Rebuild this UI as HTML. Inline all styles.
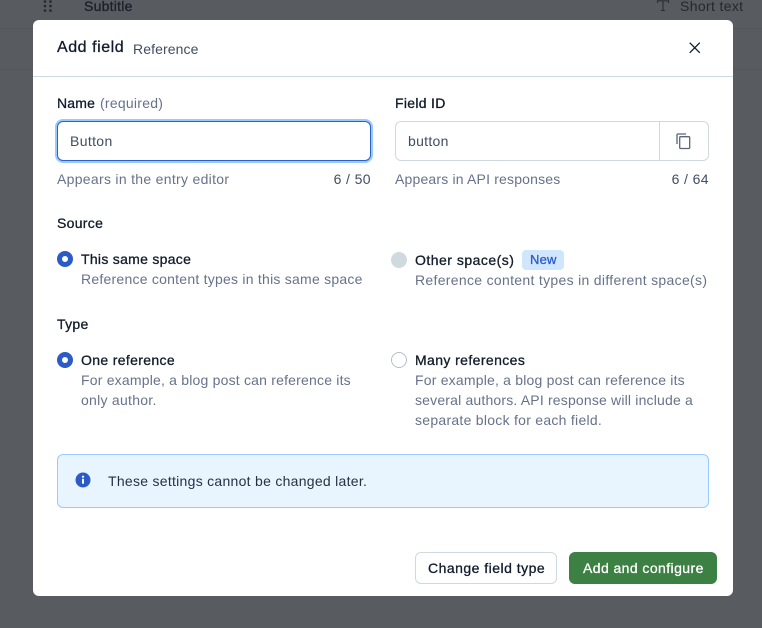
<!DOCTYPE html>
<html><head><meta charset="utf-8">
<style>
html,body{margin:0;padding:0;width:762px;height:628px;overflow:hidden;background:#585b60;font-family:"Liberation Sans",sans-serif}
.t{position:absolute;white-space:nowrap;font-size:14px;line-height:20px;color:#111b2b}
.g{color:#67728a}
.d{color:#414d63}
.b{-webkit-text-stroke:.3px currentColor}
.box{position:absolute;box-sizing:border-box}
.line{position:absolute;background:#53565b;height:1px}
</style></head><body>
<div class="line" style="left:0;top:28px;width:33px"></div>
<div class="line" style="left:733px;top:28px;width:29px"></div>
<div class="line" style="left:0;top:69px;width:33px"></div>
<div class="line" style="left:733px;top:69px;width:29px"></div>
<svg style="position:absolute;left:43px;top:0" width="10" height="13"><g fill="#23272e"><circle cx="2" cy="1.500" r="1.300"/><circle cx="7.500" cy="1.500" r="1.300"/><circle cx="2" cy="6" r="1.300"/><circle cx="7.500" cy="6" r="1.300"/><circle cx="2" cy="10.500" r="1.300"/><circle cx="7.500" cy="10.500" r="1.300"/></g></svg>
<div class="t b" style="left:84px;top:-4px;color:#1b2028;letter-spacing:.25px">Subtitle</div>
<svg style="position:absolute;left:656px;top:0" width="14" height="12"><path d="M1.500 3V.8H12.500V3M7 .8V10.500M5 10.500H9" fill="none" stroke="#2b2f36" stroke-width="1.100"/></svg>
<div class="t" style="left:680px;top:-4px;color:#25292f;letter-spacing:.35px">Short text</div>

<div class="box" style="left:33px;top:20px;width:700px;height:576px;background:#fff;border-radius:6px"></div>
<div class="box" style="left:33px;top:76px;width:700px;height:1px;background:#cfd9e0"></div>
<div class="t b" style="left:57px;top:38px;font-size:16px;line-height:20px;letter-spacing:.55px">Add field</div>
<div class="t d" style="left:133px;top:39px;letter-spacing:.1px">Reference</div>
<svg style="position:absolute;left:687px;top:40px" width="16" height="16"><path d="M2.700 2.700L12.800 12.800M12.800 2.700L2.700 12.800" stroke="#111b2b" stroke-width="1.300" fill="none"/></svg>

<div class="t b" style="left:57px;top:93px;letter-spacing:.2px">Name</div>
<div class="t g" style="left:100px;top:93px;letter-spacing:.25px">(required)</div>
<div class="box" style="left:55px;top:119px;width:318px;height:44px;background:#98cbff;border-radius:8px"></div>
<div class="box" style="left:57px;top:121px;width:314px;height:40px;border:1px solid #2f5fc9;border-radius:6px;background:#fff"></div>
<div class="t d" style="left:70px;top:131px;letter-spacing:.35px">Button</div>
<div class="t g" style="left:57px;top:169px;letter-spacing:.3px">Appears in the entry editor</div>
<div class="t d" style="right:391px;top:169px;letter-spacing:.4px">6 / 50</div>

<div class="t b" style="left:395px;top:93px;letter-spacing:.3px">Field ID</div>
<div class="box" style="left:395px;top:121px;width:314px;height:40px;border:1px solid #cfd9e0;border-radius:6px;background:#fff"></div>
<div class="box" style="left:659px;top:122px;width:1px;height:38px;background:#cfd9e0"></div>
<div class="t d" style="left:408px;top:131px;letter-spacing:.3px">button</div>
<svg style="position:absolute;left:675px;top:132px" width="18" height="18"><path d="M2 12V2.800C2 2.300 2.300 2 2.800 2H11" fill="none" stroke="#5a6579" stroke-width="1.300"/><rect x="4.700" y="4.700" width="10" height="11.800" rx="1" fill="none" stroke="#5a6579" stroke-width="1.300"/></svg>
<div class="t g" style="left:395px;top:169px;letter-spacing:.18px">Appears in API responses</div>
<div class="t d" style="right:53px;top:169px;letter-spacing:.4px">6 / 64</div>

<div class="t b" style="left:57px;top:213px;letter-spacing:.3px">Source</div>
<div class="box" style="left:57px;top:251px;width:16px;height:16px;border-radius:50%;border:5px solid #2c5bc7;background:#fff"></div>
<div class="t b" style="left:81px;top:249px;letter-spacing:.29px">This same space</div>
<div class="t g" style="left:81px;top:269px;letter-spacing:.24px">Reference content types in this same space</div>
<div class="box" style="left:391px;top:252px;width:16px;height:16px;border-radius:50%;background:#cfd9e0"></div>
<div class="t b" style="left:415px;top:250px;letter-spacing:.49px">Other space(s)</div>
<div class="box" style="left:522px;top:250px;width:42px;height:20px;border-radius:4px;background:#cfe6fd"></div>
<div class="t b" style="left:530px;top:250px;font-size:13px;color:#2c5bc7;letter-spacing:.2px">New</div>
<div class="t g" style="left:415px;top:270px;letter-spacing:.31px">Reference content types in different space(s)</div>

<div class="t b" style="left:57px;top:314px;letter-spacing:.3px">Type</div>
<div class="box" style="left:57px;top:352px;width:16px;height:16px;border-radius:50%;border:5px solid #2c5bc7;background:#fff"></div>
<div class="t b" style="left:81px;top:350px;letter-spacing:.35px">One reference</div>
<div class="t g" style="left:81px;top:370px;letter-spacing:.2px">For example, a blog post can reference its</div>
<div class="t g" style="left:81px;top:390px;letter-spacing:.27px">only author.</div>
<div class="box" style="left:391px;top:352px;width:16px;height:16px;border-radius:50%;border:1px solid #b4bfca;background:#fff"></div>
<div class="t b" style="left:415px;top:350px;letter-spacing:.4px">Many references</div>
<div class="t g" style="left:415px;top:370px;letter-spacing:.2px">For example, a blog post can reference its</div>
<div class="t g" style="left:415px;top:390px;letter-spacing:.18px">several authors. API response will include a</div>
<div class="t g" style="left:415px;top:410px;letter-spacing:.27px">separate block for each field.</div>

<div class="box" style="left:57px;top:454px;width:652px;height:54px;background:#e8f5ff;border:1px solid #98cbff;border-radius:6px"></div>
<svg style="position:absolute;left:75px;top:472px" width="16" height="16"><circle cx="8" cy="8" r="7.500" fill="#2c5bc7"/><circle cx="8" cy="4.700" r="1.100" fill="#fff"/><rect x="7" y="6.800" width="2" height="4.900" fill="#fff"/></svg>
<div class="t" style="left:108px;top:471px;color:#273142;letter-spacing:.28px">These settings cannot be changed later.</div>

<div class="box" style="left:415px;top:552px;width:142px;height:32px;background:#fff;border:1px solid #cfd9e0;border-radius:6px"></div>
<div class="t b" style="left:428px;top:558px;letter-spacing:.48px">Change field type</div>
<div class="box" style="left:569px;top:552px;width:148px;height:32px;background:#3c8043;border-radius:6px"></div>
<div class="t b" style="left:583px;top:558px;color:#fff;letter-spacing:.42px">Add and configure</div>
</body></html>
